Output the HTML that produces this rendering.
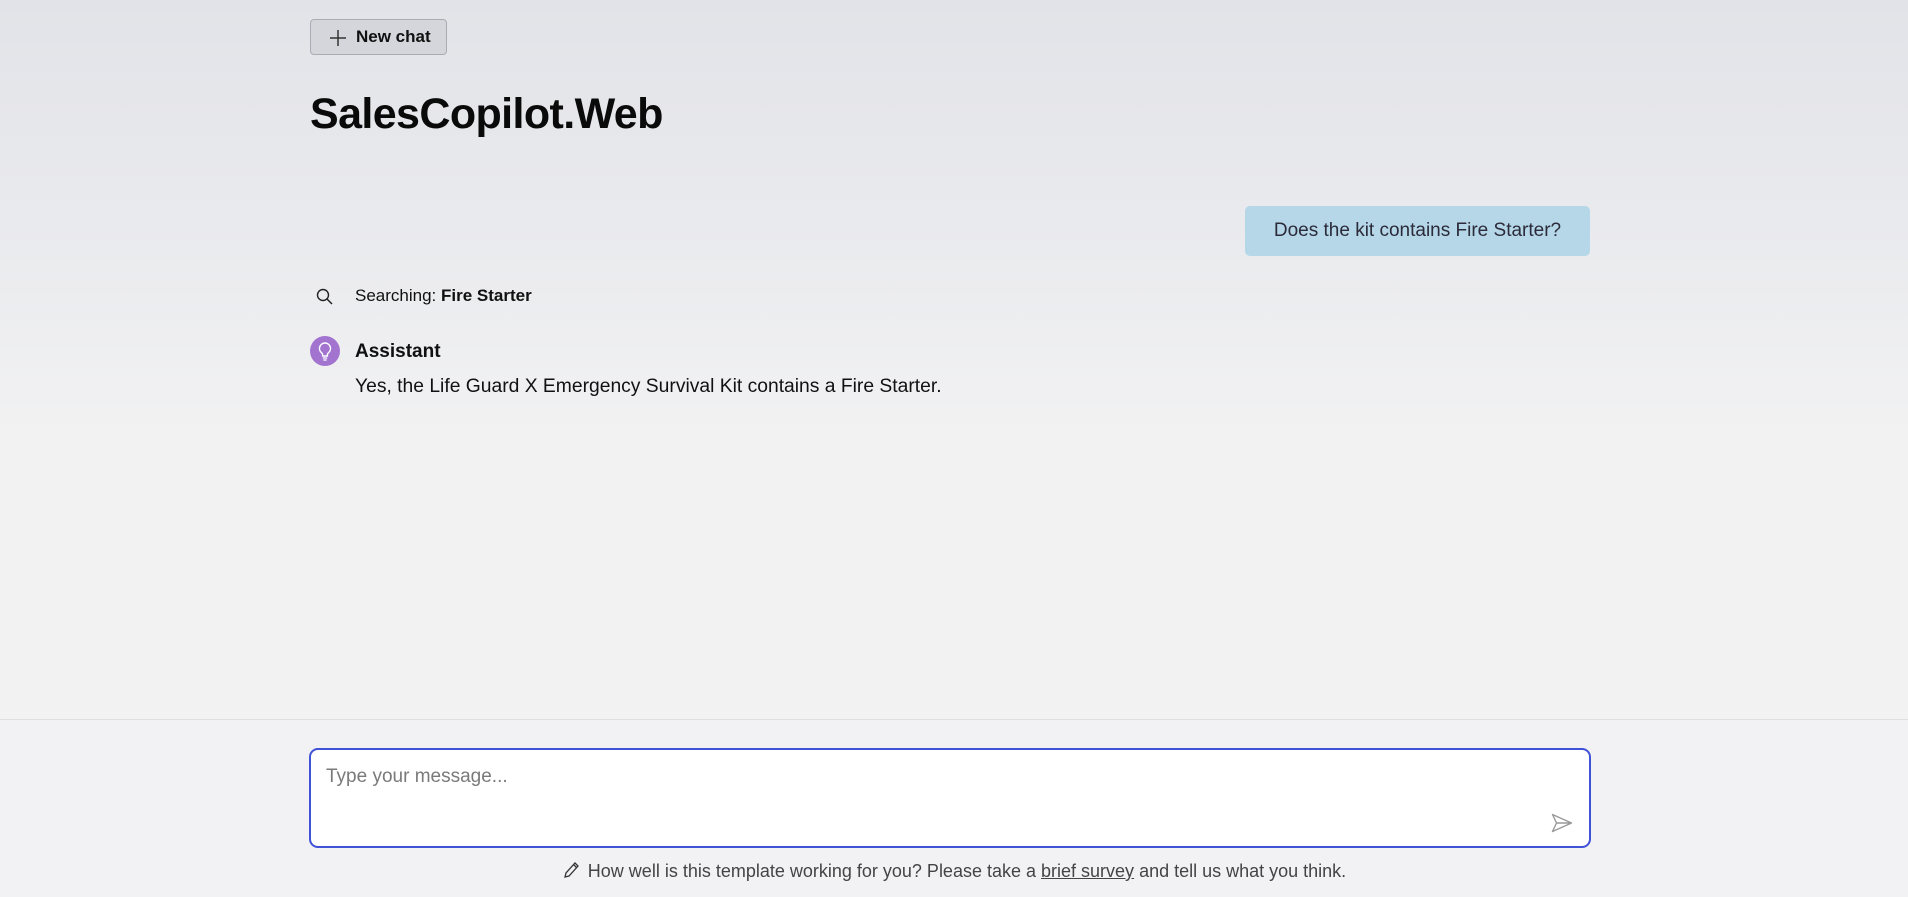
<!DOCTYPE html>
<html><head><meta charset="utf-8"><style>
*{box-sizing:border-box;margin:0;padding:0}
html,body{width:1908px;height:897px;overflow:hidden}
body{font-family:"Liberation Sans",sans-serif;background:linear-gradient(180deg,#e2e3e8 0px,#eaebee 250px,#f2f2f3 440px,#f2f2f3 719px);position:relative;color:#111}
.abs{position:absolute}
.btn{left:310px;top:19px;width:137px;height:36px;border:1px solid #a9acb4;border-radius:4px;background:#d4d6dc;font-size:17px;font-weight:bold;display:flex;align-items:center;padding-left:45px;color:#111}
.btn svg{position:absolute;left:18px;top:9px}
h1{position:absolute;left:310px;top:90px;font-size:43px;font-weight:bold;letter-spacing:-0.6px;color:#0a0a0a}
.bubble{left:1245px;top:206px;width:345px;height:50px;background:#b5d7e8;border-radius:5px;font-size:19px;color:#2b2b3a;display:flex;align-items:center;justify-content:center}
.search{left:355px;top:286px;font-size:17px}
.av{left:310px;top:336px;width:30px;height:30px;border-radius:50%;background:#a274d0}
.who{left:355px;top:341px;font-size:19px;font-weight:bold}
.ans{left:355px;top:376px;font-size:19.3px}
.bottom{left:0;top:719px;width:1908px;height:178px;background:#f2f2f4;border-top:1px solid #dfdfe2}
.input{left:309px;top:748px;width:1282px;height:100px;background:#fff;border:2px solid #4052d6;border-radius:9px}
.ph{left:326px;top:766px;font-size:19px;color:#7a7a7a}
.foot{left:0;width:1908px;top:860px;font-size:18px;color:#444;text-align:center}
.foot u{text-decoration:underline}
</style></head><body>
<div class="abs btn"><svg width="18" height="18" viewBox="0 0 18 18"><path d="M9 1v16M1 9h16" stroke="#333" stroke-width="1.5"/></svg>New chat</div>
<h1>SalesCopilot.Web</h1>
<div class="abs bubble">Does the kit contains Fire Starter?</div>
<svg class="abs" style="left:316px;top:288px" width="18" height="18" viewBox="0 0 18 18"><circle cx="7" cy="7" r="5.5" fill="none" stroke="#222" stroke-width="1.4"/><path d="M11 11l5 5" stroke="#222" stroke-width="1.5"/></svg>
<div class="abs search">Searching: <b>Fire Starter</b></div>
<div class="abs av"><svg width="30" height="30" viewBox="0 0 30 30"><path d="M15 7a5.5 5.5 0 0 0-3.3 9.9c.6.5.9 1.1.9 1.8V20h4.8v-1.3c0-.7.3-1.3.9-1.8A5.5 5.5 0 0 0 15 7z" fill="none" stroke="#fff" stroke-width="1.4"/><path d="M12.8 22h4.4M13.3 24h3.4" stroke="#fff" stroke-width="1.3"/></svg></div>
<div class="abs who">Assistant</div>
<div class="abs ans">Yes, the Life Guard X Emergency Survival Kit contains a Fire Starter.</div>
<div class="abs bottom"></div>
<div class="abs input"></div>
<div class="abs ph">Type your message...</div>
<svg class="abs" style="left:1551px;top:813px" width="22" height="20" viewBox="0 0 22 20"><path d="M1.5 1.5L20.5 10 1.5 18.5 5.5 10z M5.5 10h15" fill="none" stroke="#999" stroke-width="1.4" stroke-linejoin="round"/></svg>
<div class="abs foot"><svg width="18" height="20" viewBox="0 0 18 20" style="vertical-align:-3px;margin-right:8px"><path d="M3 17l1-4L13 3l3 3-9 10-4 1z M11.5 4.5l3 3" fill="none" stroke="#333" stroke-width="1.3"/></svg>How well is this template working for you? Please take a <u>brief survey</u> and tell us what you think.</div>
</body></html>
